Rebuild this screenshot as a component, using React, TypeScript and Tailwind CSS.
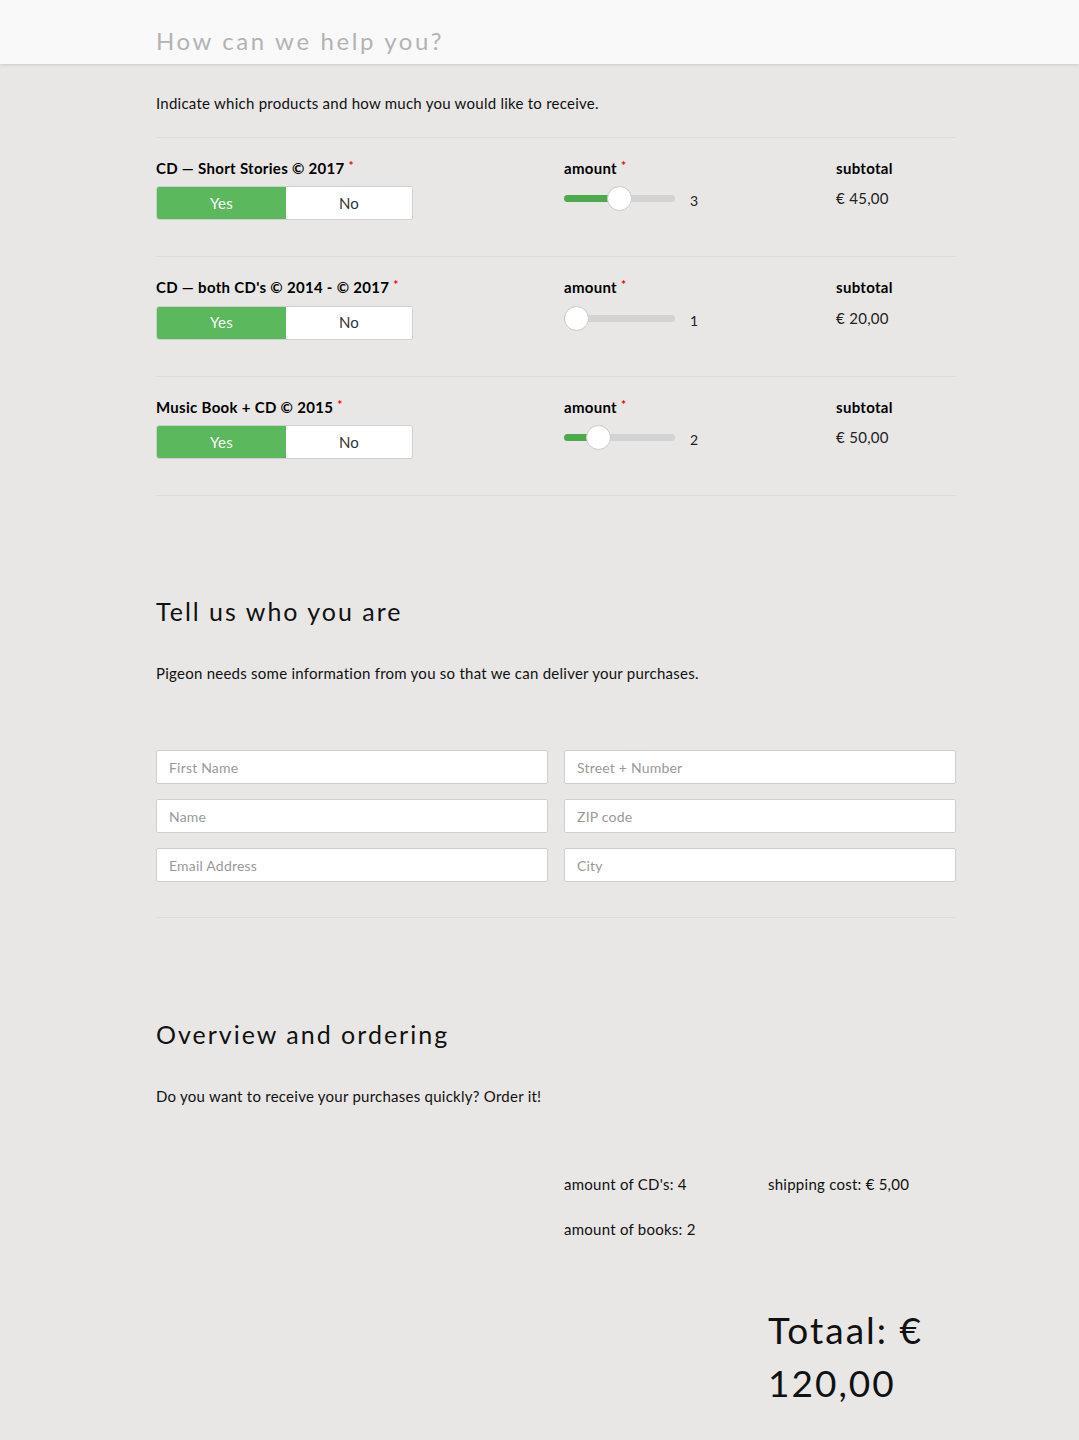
import React from "react";

type Product = {
  name: string;
  amount: number;
  subtotal: string;
};

const products: Product[] = [
  { name: "CD — Short Stories © 2017", amount: 3, subtotal: "€ 45,00" },
  { name: "CD — both CD's © 2014 - © 2017", amount: 1, subtotal: "€ 20,00" },
  { name: "Music Book + CD © 2015", amount: 2, subtotal: "€ 50,00" },
];

function Slider({ value }: { value: number }) {
  const left = (value - 1) * 21.5;
  return (
    <div className="relative h-[25px] w-[111px]">
      <div className="absolute left-0 right-0 top-[9px] h-[7px] rounded-full bg-[#d3d3d3]" />
      <div
        className="absolute left-0 top-[9px] h-[7px] rounded-full bg-[#4caa4c]"
        style={{ width: left + 12 }}
      />
      <div
        className="absolute top-0 h-[25px] w-[25px] rounded-full border border-[#c9c9c9] bg-white"
        style={{ left }}
      />
    </div>
  );
}

function ProductRow({ p }: { p: Product }) {
  return (
    <div className="grid grid-cols-12 gap-x-4 border-t border-[#dedcda] pt-[19px] pb-[36px]">
      <div className="col-span-6">
        <div className="text-[15px] font-bold tracking-[0.3px] text-black">
          {p.name} <span className="align-top text-[12px] text-red-600">*</span>
        </div>
        <div className="mt-[7px] flex h-[34px] w-[257px] overflow-hidden rounded-[3px] border border-[#d0d0d0] text-[15px]">
          <button className="w-[129px] bg-[#5cb85c] text-white">Yes</button>
          <button className="flex-1 bg-white text-[#333]">No</button>
        </div>
      </div>
      <div className="col-span-4">
        <div className="text-[15px] font-bold tracking-[0.3px] text-black">
          amount <span className="align-top text-[12px] text-red-600">*</span>
        </div>
        <div className="mt-[7px] flex items-center gap-[12px]">
          <Slider value={p.amount} />
          <span className="pl-[3px] pt-[4px] text-[14px] text-[#222]">{p.amount}</span>
        </div>
      </div>
      <div className="col-span-2">
        <div className="text-[15px] font-bold tracking-[0.3px] text-black">subtotal</div>
        <div className="mt-[8px] text-[15px] tracking-[0.3px] text-[#222]">{p.subtotal}</div>
      </div>
    </div>
  );
}

function Field({ placeholder }: { placeholder: string }) {
  return (
    <input
      placeholder={placeholder}
      className="h-[34px] w-full rounded-[2px] border border-[#cfcfcf] bg-white px-3 text-[14px] tracking-[0.2px] text-[#333] placeholder:text-[#999]"
    />
  );
}

export default function App() {
  return (
    <div
      className="min-h-[1440px] bg-[#e8e7e5] text-[#111]"
      style={{ fontFamily: "Lato, 'Open Sans', Arial, sans-serif" }}
    >
      <header className="h-[64px] bg-[#f9f9f9] shadow-[0_1px_3px_rgba(0,0,0,0.12)]">
        <div className="ml-[156px] w-[800px] pt-[25px] text-[24px] leading-[32px] tracking-[2.6px] text-[#b3b3b3]">
          How can we help you?
        </div>
      </header>

      <main className="ml-[156px] w-[800px] tracking-[0.25px]">
        <p className="pt-[28px] pb-[22px] text-[15px]">
          Indicate which products and how much you would like to receive.
        </p>
        {products.map((p) => (
          <ProductRow key={p.name} p={p} />
        ))}
        <div className="border-t border-[#dedcda]" />

        <h2 className="mt-[97px] text-[25px] tracking-[2px] text-[#111]">Tell us who you are</h2>
        <p className="mt-[31px] text-[15px]">
          Pigeon needs some information from you so that we can deliver your purchases.
        </p>
        <div className="mt-[66px] grid grid-cols-2 gap-x-4 gap-y-[15px]">
          <Field placeholder="First Name" />
          <Field placeholder="Street + Number" />
          <Field placeholder="Name" />
          <Field placeholder="ZIP code" />
          <Field placeholder="Email Address" />
          <Field placeholder="City" />
        </div>
        <div className="mt-[35px] border-t border-[#dedcda]" />

        <h2 className="mt-[98px] text-[25px] tracking-[2px] text-[#111]">Overview and ordering</h2>
        <p className="mt-[31px] text-[15px]">Do you want to receive your purchases quickly? Order it!</p>

        <div className="mt-[66px] grid grid-cols-4 gap-x-4 text-[15px]">
          <div className="col-start-3">
            <div>amount of CD's: 4</div>
            <div className="mt-[22px]">amount of books: 2</div>
          </div>
          <div>
            <div>shipping cost: € 5,00</div>
            <div className="mt-[107px] text-[37px] leading-[53px] tracking-[2px]">
              Totaal: €
              <br />
              120,00
            </div>
          </div>
        </div>
      </main>
    </div>
  );
}
